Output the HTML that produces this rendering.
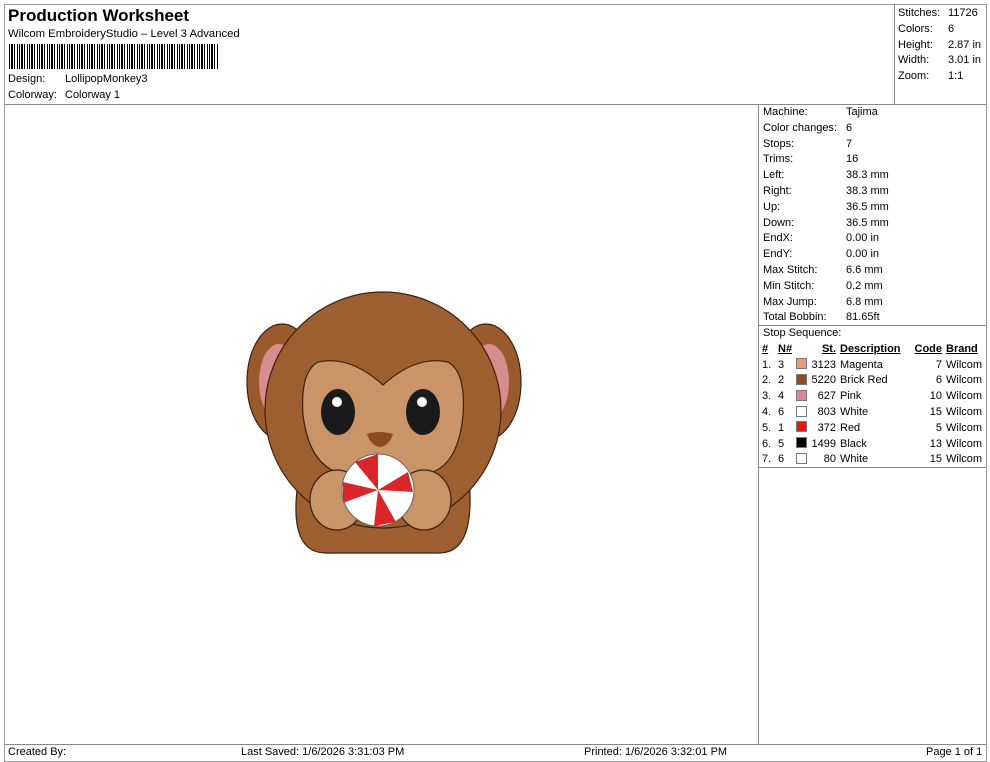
<!DOCTYPE html>
<html><head><style>
body{margin:0;width:990px;height:762px;background:#fff;font-family:"Liberation Sans",sans-serif;font-size:11px;color:#000;position:relative;overflow:hidden}
.a{position:absolute}
.bx{position:absolute;border:1px solid #888}
table{border-collapse:collapse;font-size:11px}
td{padding:0;height:15.8px;white-space:nowrap}
.sw{display:inline-block;width:9px;height:9px;border:1px solid #777;vertical-align:-1px}
</style></head><body>
<div class="bx" style="left:4px;top:4px;width:981px;height:756px;border-color:#999"></div>
<div class="a" style="left:4px;top:104px;width:982px;border-top:1px solid #888"></div>
<div class="a" style="left:894px;top:4px;height:100px;border-left:1px solid #888"></div>
<div class="a" style="left:758px;top:104px;height:640px;border-left:1px solid #888"></div>
<div class="a" style="left:4px;top:744px;width:982px;border-top:1px solid #888"></div>
<div class="a" style="left:758px;top:325px;width:228px;border-top:1px solid #888"></div>
<div class="a" style="left:758px;top:467px;width:228px;border-top:1px solid #888"></div>

<div class="a" style="left:8px;top:6px;font-size:17px;font-weight:bold">Production Worksheet</div>
<div class="a" style="left:8px;top:28px;font-size:11.3px">Wilcom EmbroideryStudio – Level 3 Advanced</div>
<div class="a" style="left:9px;top:44px;width:210px;height:25px;background:repeating-linear-gradient(90deg,#000 0 1px,#fff 1px 2px,#000 2px 4px,#fff 4px 5px,#000 5px 6px,#fff 6px 8px,#000 8px 9px,#fff 9px 10px)"></div>
<div class="a" style="left:8px;top:73px">Design:</div><div class="a" style="left:65px;top:73px">LollipopMonkey3</div>
<div class="a" style="left:8px;top:89px">Colorway:</div><div class="a" style="left:65px;top:89px">Colorway 1</div>

<div class="a" style="left:898px;top:6px;line-height:15.8px">Stitches:<br>Colors:<br>Height:<br>Width:<br>Zoom:</div>
<div class="a" style="left:948px;top:6px;line-height:15.8px">11726<br>6<br>2.87 in<br>3.01 in<br>1:1</div>

<div class="a" style="left:763px;top:105px;line-height:15.8px">Machine:<br>Color changes:<br>Stops:<br>Trims:<br>Left:<br>Right:<br>Up:<br>Down:<br>EndX:<br>EndY:<br>Max Stitch:<br>Min Stitch:<br>Max Jump:<br>Total Bobbin:<br>Stop Sequence:</div>
<div class="a" style="left:846px;top:105px;line-height:15.8px">Tajima<br>6<br>7<br>16<br>38.3 mm<br>38.3 mm<br>36.5 mm<br>36.5 mm<br>0.00 in<br>0.00 in<br>6.6 mm<br>0.2 mm<br>6.8 mm<br>81.65ft</div>

<table class="a" style="left:762px;top:341px">
<tr style="font-weight:bold;text-decoration:underline"><td style="width:16px">#</td><td style="width:18px">N#</td><td style="width:14px"></td><td style="width:26px;text-align:right">St.</td><td style="width:70px;padding-left:4px">Description</td><td style="width:32px;text-align:right">Code</td><td style="padding-left:4px">Brand</td></tr>
<tr><td>1.</td><td>3</td><td><span class="sw" style="background:#e89a7c"></span></td><td align="right">3123</td><td style="padding-left:4px">Magenta</td><td align="right">7</td><td style="padding-left:4px">Wilcom</td></tr>
<tr><td>2.</td><td>2</td><td><span class="sw" style="background:#8e4a25"></span></td><td align="right">5220</td><td style="padding-left:4px">Brick Red</td><td align="right">6</td><td style="padding-left:4px">Wilcom</td></tr>
<tr><td>3.</td><td>4</td><td><span class="sw" style="background:#d9869a"></span></td><td align="right">627</td><td style="padding-left:4px">Pink</td><td align="right">10</td><td style="padding-left:4px">Wilcom</td></tr>
<tr><td>4.</td><td>6</td><td><span class="sw" style="background:#fff"></span></td><td align="right">803</td><td style="padding-left:4px">White</td><td align="right">15</td><td style="padding-left:4px">Wilcom</td></tr>
<tr><td>5.</td><td>1</td><td><span class="sw" style="background:#e01818"></span></td><td align="right">372</td><td style="padding-left:4px">Red</td><td align="right">5</td><td style="padding-left:4px">Wilcom</td></tr>
<tr><td>6.</td><td>5</td><td><span class="sw" style="background:#000"></span></td><td align="right">1499</td><td style="padding-left:4px">Black</td><td align="right">13</td><td style="padding-left:4px">Wilcom</td></tr>
<tr><td>7.</td><td>6</td><td><span class="sw" style="background:#fff"></span></td><td align="right">80</td><td style="padding-left:4px">White</td><td align="right">15</td><td style="padding-left:4px">Wilcom</td></tr>
</table>

<svg class="a" style="left:0;top:0" width="760" height="740" viewBox="0 0 760 740">
<g stroke="#3a2210" stroke-width="1.2">
<ellipse cx="282" cy="382" rx="35" ry="58" fill="#9a5a2c"/>
<ellipse cx="486" cy="382" rx="35" ry="58" fill="#9a5a2c"/>
<ellipse cx="279" cy="382" rx="20" ry="38" fill="#d88c8c" stroke="none"/>
<ellipse cx="489" cy="382" rx="20" ry="38" fill="#d88c8c" stroke="none"/>
<path d="M300 470 Q285 552 325 553 L440 553 Q478 552 468 470Z" fill="#9e5f30"/>
<circle cx="383" cy="410" r="118" fill="#9e5f30"/>
<path d="M383 385 Q350 355 318 362 Q300 372 303 415 Q310 472 350 475 L420 475 Q458 472 463 415 Q466 372 448 362 Q416 355 383 385Z" fill="#c89468"/>
<ellipse cx="337" cy="500" rx="27" ry="30" fill="#c89468"/>
<ellipse cx="424" cy="500" rx="27" ry="30" fill="#c89468"/>
</g>
<circle cx="378" cy="490" r="36" fill="#fff" stroke="#666"/>
<path d="M378 490 L355 462 L378 454Z M378 490 L408 472 L413 492Z M378 490 L396 522 L374 526Z M378 490 L343 503 L343 482Z" fill="#d8262a"/>
<ellipse cx="338" cy="412" rx="17" ry="23" fill="#1a1a1a"/>
<ellipse cx="423" cy="412" rx="17" ry="23" fill="#1a1a1a"/>
<circle cx="337" cy="402" r="5" fill="#fff"/><circle cx="422" cy="402" r="5" fill="#fff"/>
<path d="M367 434 Q380 430 393 434 Q389 446 380 447 Q371 446 367 434Z" fill="#8a4a22"/>
</svg>

<div class="a" style="left:8px;top:746px">Created By:</div>
<div class="a" style="left:241px;top:746px">Last Saved: 1/6/2026 3:31:03 PM</div>
<div class="a" style="left:584px;top:746px">Printed: 1/6/2026 3:32:01 PM</div>
<div class="a" style="left:926px;top:746px">Page 1 of 1</div>
</body></html>
